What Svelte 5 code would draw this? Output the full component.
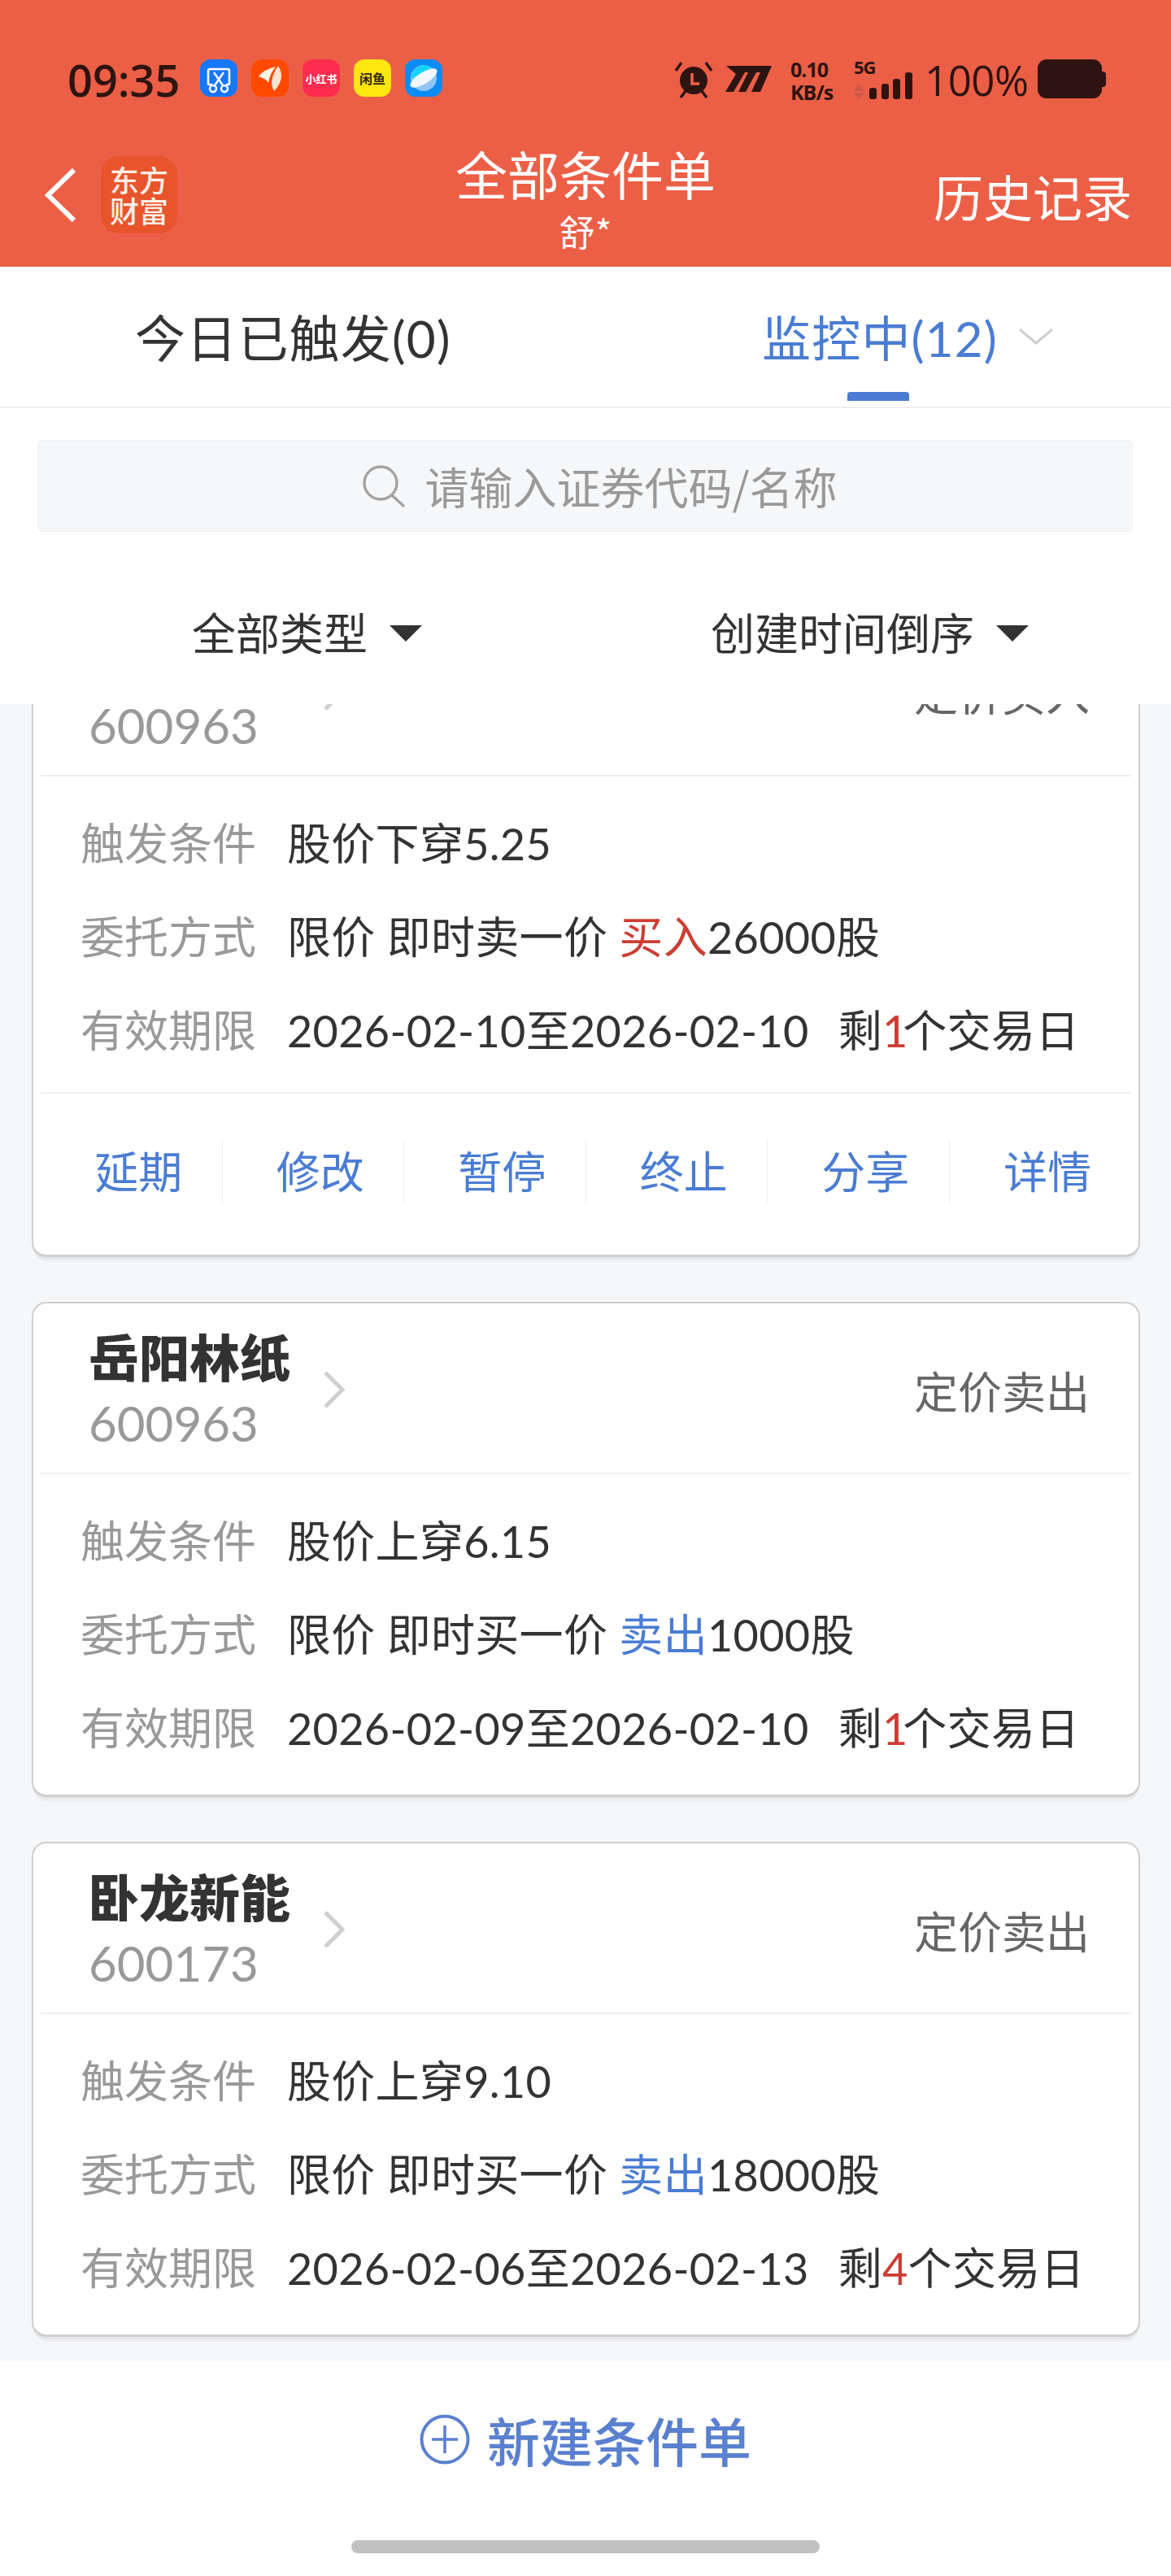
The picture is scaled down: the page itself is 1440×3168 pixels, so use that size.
<script lang="ts">
	const cards = [
		{
			name: '岳阳林纸',
			code: '600963',
			kind: '定价买入',
			cond: '股价下穿5.25',
			order: '限价 即时卖一价',
			side: '买入',
			sideClass: 'red',
			qty: '26000股',
			range: '2026-02-10至2026-02-10',
			left: '1',
			actions: true
		},
		{
			name: '岳阳林纸',
			code: '600963',
			kind: '定价卖出',
			cond: '股价上穿6.15',
			order: '限价 即时买一价',
			side: '卖出',
			sideClass: 'blue',
			qty: '1000股',
			range: '2026-02-09至2026-02-10',
			left: '1',
			actions: false
		},
		{
			name: '卧龙新能',
			code: '600173',
			kind: '定价卖出',
			cond: '股价上穿9.10',
			order: '限价 即时买一价',
			side: '卖出',
			sideClass: 'blue',
			qty: '18000股',
			range: '2026-02-06至2026-02-13',
			left: '4',
			actions: false
		}
	];

	const actions = ['延期', '修改', '暂停', '终止', '分享', '详情'];
</script>

<div class="screen">
	<header class="top">
		<div class="status">
			<span class="clock">09:35</span>
			<div class="apps">
				<span class="app a1">
					<svg viewBox="0 0 46 47" width="46" height="47">
						<path d="M15 31 L11 31 Q10 31 10 30 V14 Q10 12 12 12 H34 Q36 12 36 14 V30 Q36 31 35 31 H32" fill="none" stroke="#fff" stroke-width="2.6" />
						<path d="M17 16 L28 32 M29 16 L18 32" fill="none" stroke="#fff" stroke-width="2.4" />
						<circle cx="16" cy="36" r="4" fill="none" stroke="#fff" stroke-width="2.4" />
						<circle cx="30" cy="36" r="4" fill="none" stroke="#fff" stroke-width="2.4" />
					</svg>
				</span>
				<span class="app a2">
					<svg viewBox="0 0 46 46" width="46" height="46">
						<path d="M9 21 Q14 13 30 9 Q23 17 21 29 Q19 24 9 21 Z" fill="#fff4ea" />
						<path d="M33 8 Q26 18 25 28 Q25 34 28 39 Q37 30 37 20 Q37 14 33 8 Z" fill="#ffe3d2" />
					</svg>
				</span>
				<span class="app a3">小红书</span>
				<span class="app a4">闲鱼</span>
				<span class="app a5">
					<svg viewBox="0 0 46 46" width="46" height="46">
						<circle cx="23" cy="23" r="16" fill="#8ec5fb" />
						<path d="M8 24 A16 16 0 0 1 33 10 Z" fill="#12d4ff" />
						<ellipse cx="23" cy="23" rx="19" ry="7" transform="rotate(-32 23 23)" fill="#f2f8ff" />
					</svg>
				</span>
			</div>
			<div class="indicators">
				<svg class="alarm" viewBox="0 0 48 48" width="48" height="48">
					<circle cx="24" cy="26" r="17" fill="#2e1410" />
					<path d="M2 14 L9 4 M46 14 L39 4" stroke="#2e1410" stroke-width="3.4" fill="none" />
					<path d="M8 47 L14 39 M40 47 L34 39" stroke="#2e1410" stroke-width="3.4" fill="none" />
					<path d="M22 17 V30 H31" stroke="#ec5f47" stroke-width="3.6" fill="none" />
				</svg>
				<svg class="mlogo" viewBox="0 0 57 32" width="57" height="32">
					<path d="M1 0 H57 L43 32 H32 L43 8 H38 L25 32 H16 L28 8 H24 L10 32 H0 L13 10 Z" fill="#2e1410" />
				</svg>
				<div class="speed"><span>0.10</span><span>KB/s</span></div>
				<div class="signal">
					<span class="fiveg">5G</span>
					<svg viewBox="0 0 72 49" width="72" height="49">
						<path d="M0 39 L6.500 31 L13 39 Z M0 41 H13 L6.500 49 Z" fill="#cf5643" />
						<rect x="19" y="35" width="9" height="14" rx="3" fill="#2e1410" />
						<rect x="34" y="30" width="9" height="19" rx="3" fill="#2e1410" />
						<rect x="48" y="24" width="9" height="25" rx="3" fill="#2e1410" />
						<rect x="63" y="16" width="9" height="33" rx="3" fill="#2e1410" />
					</svg>
				</div>
				<span class="pct">100%</span>
				<span class="battery"></span>
			</div>
		</div>
		<nav class="nav">
			<div class="nav-left">
				<svg viewBox="0 0 40 68" width="40" height="68">
					<path d="M37 3 L5 34 L37 65" fill="none" stroke="#fff" stroke-width="6" />
				</svg>
				<span class="logo">东方<br />财富</span>
			</div>
			<div class="nav-title">
				<span class="title">全部条件单</span>
				<span class="sub">舒*</span>
			</div>
			<span class="history">历史记录</span>
		</nav>
	</header>

	<div class="tabs">
		<div class="tab">今日已触发(0)</div>
		<div class="tab active">
			监控中(12)
			<svg class="tab-caret" viewBox="0 0 42 20" width="42" height="20">
				<path d="M1 1 L21 18 L41 1" fill="none" stroke="#cfcfcf" stroke-width="3" />
			</svg>
			<span class="underline"></span>
		</div>
	</div>

	<div class="search-wrap">
		<div class="search">
			<svg viewBox="0 0 54 52" width="54" height="52">
				<circle cx="23" cy="22" r="20" fill="none" stroke="#a3a3a3" stroke-width="3.400" />
				<path d="M37 37 L52 51" stroke="#a3a3a3" stroke-width="3.400" />
			</svg>
			<span>请输入证券代码/名称</span>
		</div>
	</div>

	<div class="filters">
		<div class="filter f1">全部类型<i class="tri"></i></div>
		<div class="filter f2">创建时间倒序<i class="tri"></i></div>
	</div>

	<main class="list">
		{#each cards as c, i (i)}
			<section class="card" class:with-actions={c.actions}>
				<div class="card-head">
					<div class="ident">
						<div class="name">{c.name}</div>
						<div class="code">{c.code}</div>
					</div>
					<svg class="arrow" viewBox="0 0 28 46" width="28" height="46">
						<path d="M3 2 L24 23 L3 44" fill="none" stroke="#cfcfcf" stroke-width="5" />
					</svg>
					<span class="kind">{c.kind}</span>
				</div>
				<div class="card-body">
					<div class="row">
						<span class="label">触发条件</span>
						<span class="value">{c.cond}</span>
					</div>
					<div class="row">
						<span class="label">委托方式</span>
						<span class="value">{c.order} <span class={c.sideClass}>{c.side}</span>{c.qty}</span>
					</div>
					<div class="row">
						<span class="label">有效期限</span>
						<span class="value">{c.range}<span class="remain">剩<span class="red" class:tight={c.left === '1'}>{c.left}</span>个交易日</span></span>
					</div>
				</div>
				{#if c.actions}
					<div class="actions">
						{#each actions as a (a)}
							<span class="action">{a}</span>
						{/each}
					</div>
				{/if}
			</section>
		{/each}
	</main>

	<footer class="bottom">
		<div class="create">
			<svg viewBox="0 0 62 62" width="62" height="62">
				<circle cx="31" cy="31" r="28.500" fill="none" stroke="#5a80cf" stroke-width="4" />
				<path d="M31 14 V48 M15 31 H47" stroke="#5a80cf" stroke-width="3.600" />
			</svg>
			<span>新建条件单</span>
		</div>
		<div class="home"></div>
	</footer>
</div>

<style>
	:global(body) {
		margin: 0;
		background: #fff;
	}

	.screen {
		width: 1440px;
		height: 3168px;
		display: flex;
		flex-direction: column;
		overflow: hidden;
		font-family: Lato, 'Noto Sans CJK SC', sans-serif;
		color: #333;
		background: #fff;
	}

	.top {
		height: 328px;
		flex: none;
		background: #ec5f47;
		color: #fff;
	}

	.status {
		height: 146px;
		padding: 50px 85px 0 83px;
		box-sizing: border-box;
		display: flex;
		align-items: flex-start;
		color: #2e1410;
		font-family: 'Open Sans', 'Noto Sans CJK SC', sans-serif;
	}

	.clock {
		font-size: 54px;
		line-height: 96px;
		font-weight: 600;
		width: 163px;
		height: 96px;
	}

	.apps {
		display: flex;
		gap: 17px;
		margin-top: 23px;
	}

	.app {
		width: 46px;
		height: 46px;
		border-radius: 13px;
		display: flex;
		align-items: center;
		justify-content: center;
		overflow: hidden;
		font-family: 'Noto Sans CJK SC', sans-serif;
		font-weight: 700;
		white-space: nowrap;
	}

	.a1 {
		background: #1677ff;
	}
	.a2 {
		background: #ff4a00;
	}
	.a3 {
		background: #fe2c4e;
		color: #fff;
		font-size: 13px;
	}
	.a4 {
		background: #ffe60f;
		color: #33281a;
		font-size: 16px;
	}
	.a5 {
		background: #0b8cf5;
	}

	.indicators {
		margin-left: auto;
		display: flex;
		align-items: flex-start;
		margin-top: 23px;
	}

	.mlogo {
		margin: 8px 0 0 15px;
	}

	.speed {
		margin: -2px 0 0 23px;
		display: flex;
		flex-direction: column;
		font-size: 25px;
		line-height: 28px;
		font-weight: 700;
		width: 57px;
		letter-spacing: -1px;
	}

	.signal {
		margin-left: 21px;
		width: 72px;
		height: 49px;
		position: relative;
	}

	.signal svg {
		display: block;
	}

	.fiveg {
		position: absolute;
		left: 0;
		top: -5px;
		font-size: 22px;
		line-height: 28px;
		font-weight: 700;
		letter-spacing: -1px;
	}

	.pct {
		margin-left: 15px;
		width: 139px;
		font-size: 51px;
		line-height: 50px;
		font-weight: 500;
		letter-spacing: -0.5px;
	}

	.battery {
		width: 79px;
		height: 48px;
		background: #2e1410;
		border-radius: 11px;
		position: relative;
	}

	.battery::after {
		content: '';
		position: absolute;
		left: 79px;
		top: 15px;
		width: 5px;
		height: 19px;
		background: #2e1410;
		border-radius: 0 4px 4px 0;
	}

	.nav {
		height: 182px;
		display: grid;
		grid-template-columns: 1fr auto 1fr;
		align-items: start;
		padding: 46px 48px 0 54px;
		box-sizing: border-box;
		font-family: 'Noto Sans CJK SC', sans-serif;
	}

	.nav-left {
		display: flex;
		align-items: center;
		gap: 30px;
	}

	.logo {
		width: 94px;
		height: 95px;
		border-radius: 22px;
		background: #e8552c;
		color: #fdeee4;
		font-size: 36px;
		line-height: 38px;
		font-weight: 500;
		text-align: center;
		box-sizing: border-box;
		padding-top: 9px;
		display: block;
	}

	.nav-title {
		margin-top: -16px;
		display: flex;
		flex-direction: column;
		align-items: center;
		transform: translateX(-3px);
	}

	.title {
		font-size: 64px;
		line-height: 72px;
	}

	.sub {
		font-size: 44px;
		line-height: 72px;
	}

	.history {
		font-size: 61px;
		line-height: 70px;
		margin-top: 14px;
		justify-self: end;
	}

	.tabs {
		height: 174px;
		flex: none;
		box-sizing: border-box;
		border-bottom: 2px solid #eeeeee;
		position: relative;
		display: flex;
		font-size: 62px;
	}

	.tab {
		position: absolute;
		top: 48px;
		line-height: 80px;
		white-space: nowrap;
		left: 166px;
		letter-spacing: 1.200px;
	}

	.tab.active {
		left: 937px;
		color: #4a7cd4;
		font-size: 60px;
	}

	.tab-caret {
		position: absolute;
		left: 316px;
		top: 28px;
	}

	.underline {
		position: absolute;
		left: 105px;
		top: 106px;
		width: 76px;
		height: 11px;
		border-radius: 4px 4px 0 0;
		background: #4a7cd4;
	}

	.search-wrap {
		flex: none;
		padding: 39px 47px 0 46px;
	}

	.search {
		height: 113px;
		box-sizing: border-box;
		background: #f6f7f9;
		border: 1px solid #eff0f2;
		border-radius: 6px;
		display: flex;
		align-items: center;
		justify-content: center;
		gap: 23px;
		font-family: 'Noto Sans CJK SC', sans-serif;
		font-size: 54px;
		color: #999;
		padding-left: 36px;
	}

	.filters {
		flex: none;
		height: 212px;
		position: relative;
		font-size: 54px;
		display: flex;
	}

	.filter {
		line-height: 72px;
		margin-top: 90px;
		height: 72px;
		display: flex;
		align-items: center;
		gap: 27px;
		white-space: nowrap;
	}

	.f1 {
		margin-left: 236px;
	}

	.f2 {
		margin-left: 355px;
	}

	.tri {
		width: 0;
		height: 0;
		border-left: 20px solid transparent;
		border-right: 20px solid transparent;
		border-top: 20px solid #333;
		margin-top: -2px;
	}

	.list {
		flex: none;
		height: 2038px;
		overflow: hidden;
		background: #f6f7f9;
		padding: 0 38px 0 39px;
	}

	.card {
		background: #fff;
		border: 2px solid #cfcfcf;
		border-bottom-width: 3px;
		border-radius: 18px;
		box-shadow:
			0 4px 0 -1px #e6e7e9,
			0 9px 0 -3px #eef0f2;
		box-sizing: border-box;
		height: 609px;
		margin-bottom: 55px;
		padding: 0 9px;
	}

	.card.with-actions {
		height: 803px;
		margin-top: -123px;
	}

	.card-head {
		height: 210px;
		box-sizing: border-box;
		border-bottom: 2px solid #eeeeee;
		display: flex;
		align-items: flex-start;
		position: relative;
		padding: 28px 0 0 59px;
	}

	.ident {
		width: 288px;
	}

	.name {
		font-family: 'Noto Sans CJK SC', sans-serif;
		font-weight: 900;
		font-size: 62px;
		line-height: 72px;
	}

	.code {
		font-size: 60px;
		line-height: 72px;
		color: #999;
		margin-top: 11px;
	}

	.arrow {
		margin-top: 55px;
	}

	.kind {
		margin-left: auto;
		margin-right: 51px;
		margin-top: 47px;
		font-size: 54px;
		line-height: 70px;
		color: #666;
	}

	.card-body {
		padding: 22px 0 0 49px;
	}

	.row {
		height: 115px;
		display: flex;
		align-items: center;
		font-size: 54px;
		white-space: nowrap;
	}

	.label {
		width: 254px;
		color: #999;
	}

	.value {
		letter-spacing: 0.300px;
	}

	.remain {
		margin-left: 36px;
	}

	.red {
		color: #cc3d33;
	}

	.red.tight {
		letter-spacing: -6px;
	}

	.blue {
		color: #4a7cd4;
	}

	.actions {
		margin-top: 21px;
		border-top: 2px solid #eeeeee;
		display: grid;
		grid-template-columns: repeat(6, 1fr);
		padding-top: 57px;
	}

	.action {
		height: 78px;
		line-height: 80px;
		font-size: 54px;
		color: #4a7cd4;
		text-align: center;
		padding-left: 18px;
		border-right: 1px solid #eeeeee;
	}

	.action:last-child {
		border-right: none;
	}

	.bottom {
		flex: 1;
		background: #fff;
		display: flex;
		flex-direction: column;
		align-items: center;
	}

	.create {
		margin-top: 64px;
		height: 64px;
		display: flex;
		align-items: center;
		gap: 21px;
		font-family: 'Noto Sans CJK SC', sans-serif;
		font-size: 65px;
		font-weight: 500;
		color: #5a80cf;
	}

	.home {
		margin-top: 92px;
		width: 576px;
		height: 16px;
		border-radius: 8px;
		background: #c1c1c1;
	}
</style>
